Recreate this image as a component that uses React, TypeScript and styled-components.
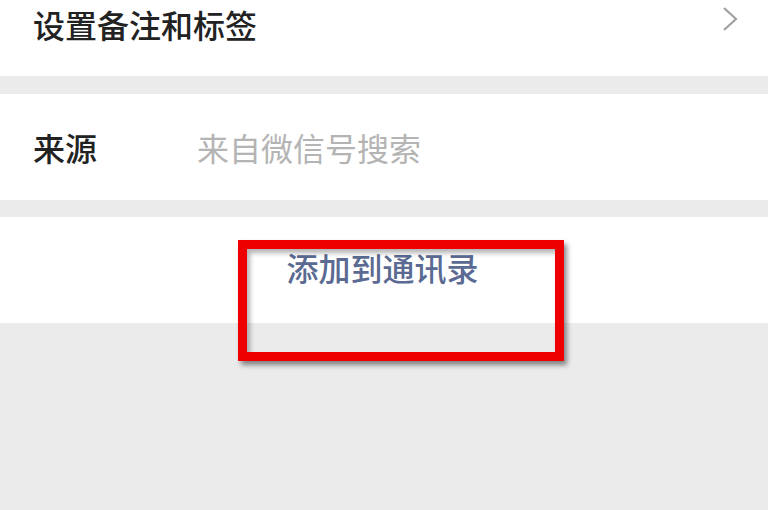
import React from "react";
import styled, { createGlobalStyle } from "styled-components";

const GlobalStyle = createGlobalStyle`
  html, body {
    margin: 0;
    padding: 0;
    background: #ebebeb;
    font-family: "Noto Sans CJK SC", "Noto Sans", sans-serif;
  }
`;

const Page = styled.div`
  position: relative;
  width: 768px;
  height: 510px;
  overflow: hidden;
  background: #ebebeb;
  display: flex;
  flex-direction: column;
`;

const Cell = styled.div<{ $height: number; $gap?: number; $padTop?: number }>`
  display: flex;
  align-items: ${({ $padTop }) => ($padTop !== undefined ? "flex-start" : "center")};
  box-sizing: border-box;
  height: ${({ $height }) => $height}px;
  margin-top: ${({ $gap }) => $gap ?? 0}px;
  padding: ${({ $padTop }) => $padTop ?? 0}px 30px 0 33px;
  background: #ffffff;
`;

const Label = styled.span<{ $width?: number }>`
  font-size: 32px;
  font-weight: 500;
  line-height: 1;
  color: #222222;
  width: ${({ $width }) => ($width ? `${$width}px` : "auto")};
  flex: ${({ $width }) => ($width ? "none" : "1")};
`;

const Value = styled.span`
  font-size: 32px;
  line-height: 1;
  color: #b4b4b4;
`;

const Chevron = styled.svg`
  width: 16px;
  height: 26px;
  margin-top: -2px;
`;

const ActionCell = styled.div`
  display: flex;
  align-items: center;
  justify-content: center;
  height: 106px;
  margin-top: 17px;
  padding-right: 153px;
  padding-left: 150px;
  box-sizing: border-box;
  background: #ffffff;
`;

const ActionText = styled.span`
  font-size: 32px;
  font-weight: 500;
  line-height: 1;
  color: #5a6a92;
  margin-top: -6px;
`;

const Highlight = styled.div`
  position: absolute;
  left: 238px;
  top: 240px;
  width: 326px;
  height: 121px;
  box-sizing: border-box;
  border: 9px solid #ee0000;
  box-shadow: 3px 4px 5px rgba(0, 0, 0, 0.45), inset 3px 4px 5px rgba(0, 0, 0, 0.3);
  pointer-events: none;
`;

export default function App() {
  return (
    <>
      <GlobalStyle />
      <Page>
        <Cell $height={76} $padTop={8}>
          <Label>设置备注和标签</Label>
          <Chevron viewBox="0 0 16 26">
            <path d="M2 2 L14 13 L2 24" fill="none" stroke="#a0a0a0" strokeWidth="2.2" />
          </Chevron>
        </Cell>
        <Cell $height={106} $gap={18}>
          <Label $width={164}>来源</Label>
          <Value>来自微信号搜索</Value>
        </Cell>
        <ActionCell>
          <ActionText>添加到通讯录</ActionText>
        </ActionCell>
        <Highlight />
      </Page>
    </>
  );
}
